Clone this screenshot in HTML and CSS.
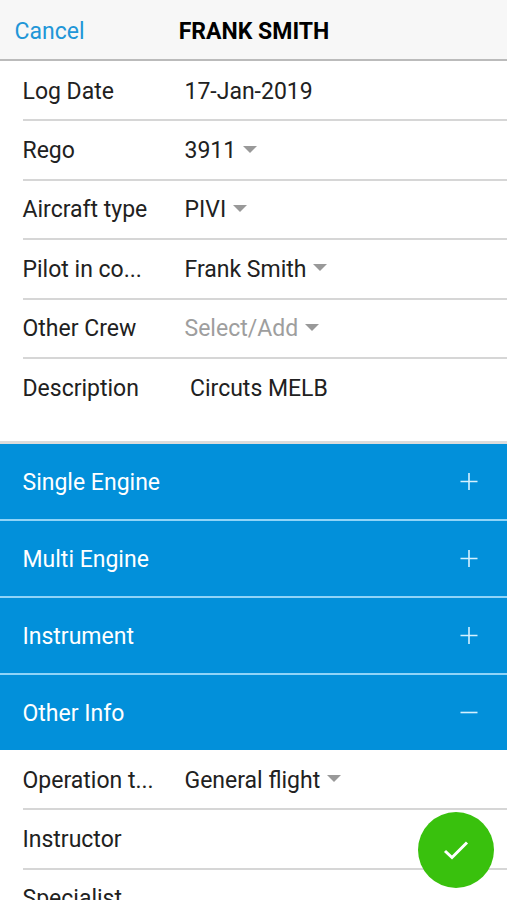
FILE: index.html
```
<!DOCTYPE html>
<html lang="en">
<head>
    <meta charset="UTF-8">
    <meta name="viewport" content="width=device-width, initial-scale=1.0">
    <title>Log Entry</title>
    <link rel="stylesheet" href="styles.css">
</head>
<body>
    <header class="toolbar">
        <a class="cancel">Cancel</a>
        <h1>FRANK SMITH</h1>
    </header>

    <div class="list details">
        <div class="item">
            <div class="label">Log Date</div>
            <div class="value">17-Jan-2019</div>
        </div>
        <div class="item">
            <div class="label">Rego</div>
            <div class="value">3911</div>
            <span class="arrow"></span>
        </div>
        <div class="item">
            <div class="label">Aircraft type</div>
            <div class="value">PIVI</div>
            <span class="arrow"></span>
        </div>
        <div class="item">
            <div class="label">Pilot in co...</div>
            <div class="value">Frank Smith</div>
            <span class="arrow"></span>
        </div>
        <div class="item">
            <div class="label">Other Crew</div>
            <div class="value placeholder">Select/Add</div>
            <span class="arrow"></span>
        </div>
        <div class="item">
            <div class="label">Description</div>
            <div class="value text">Circuts MELB</div>
        </div>
    </div>

    <div class="sections">
        <div class="section">
            <span>Single Engine</span>
            <svg class="toggle" viewBox="0 0 18 18"><path d="M0.5 8.5h17M9 0v17"/></svg>
        </div>
        <div class="section">
            <span>Multi Engine</span>
            <svg class="toggle" viewBox="0 0 18 18"><path d="M0.5 8.5h17M9 0v17"/></svg>
        </div>
        <div class="section">
            <span>Instrument</span>
            <svg class="toggle" viewBox="0 0 18 18"><path d="M0.5 8.5h17M9 0v17"/></svg>
        </div>
        <div class="section">
            <span>Other Info</span>
            <svg class="toggle" viewBox="0 0 18 18"><path d="M0.5 8.5h17"/></svg>
        </div>
    </div>

    <div class="list">
        <div class="item">
            <div class="label">Operation t...</div>
            <div class="value">General flight</div>
            <span class="arrow"></span>
        </div>
        <div class="item">
            <div class="label">Instructor</div>
        </div>
        <div class="item">
            <div class="label">Specialist</div>
        </div>
    </div>

    <div class="fab">
        <svg viewBox="0 0 26 20"><path d="M2 11l7 6.5L24 2.5"/></svg>
    </div>
</body>
</html>
```

FILE: styles.css
```
* {
    box-sizing: border-box;
}
body {
    margin: 0;
    height: 900px;
    overflow: hidden;
    position: relative;
    background: #fff;
    color: #212121;
    font-family: Roboto, sans-serif;
    font-size: 23px;
    line-height: 28px;
}
.toolbar {
    display: grid;
    grid-template-columns: 1fr auto 1fr;
    align-items: center;
    height: 61px;
    padding: 5px 14px 0 15px;
    background: #f7f7f7;
    border-bottom: 2px solid #bbb;
}
.toolbar h1 {
    margin: 0;
    color: #000;
    font-size: 23px;
    font-weight: 700;
}
.cancel {
    margin-left: -0.5px;
    color: #2196d8;
}
.list {
    padding: 1px 0 0 22.5px;
}
.details {
    height: 380px;
}
.item {
    display: flex;
    align-items: center;
    height: 59.4px;
    border-bottom: 2px solid #d6d6d6;
}
.item:last-child {
    border-bottom-color: transparent;
}
.label {
    width: 132px;
    margin-right: 30px;
    white-space: nowrap;
}
.label, .value {
    padding-top: 2px;
}
.value.text {
    padding-left: 5.5px;
}
.placeholder {
    color: #9e9e9e;
}
.arrow {
    margin: 0 0 2px 7px;
    border: 7px solid transparent;
    border-top-color: #999;
    border-bottom: 0;
}
.sections {
    border-top: 3px solid #dcdcdc;
}
.section {
    display: flex;
    justify-content: space-between;
    align-items: center;
    height: 77px;
    padding: 0 29px 0 22.5px;
    background: #0290da;
    border-bottom: 2px solid #8fd4f8;
    color: #fff;
}
.section span {
    padding-top: 2px;
}
.section:last-child {
    height: 75px;
    border-bottom: 0;
}
.toggle {
    width: 18px;
    height: 18px;
    fill: none;
    stroke: #d5f1ff;
    stroke-width: 1.6;
}
.fab {
    position: absolute;
    right: 13px;
    bottom: 12px;
    display: flex;
    align-items: center;
    justify-content: center;
    width: 76px;
    height: 76px;
    border-radius: 50%;
    background: #39c10d;
}
.fab svg {
    width: 26px;
    height: 20px;
    fill: none;
    stroke: #fff;
    stroke-width: 3;
}
```
